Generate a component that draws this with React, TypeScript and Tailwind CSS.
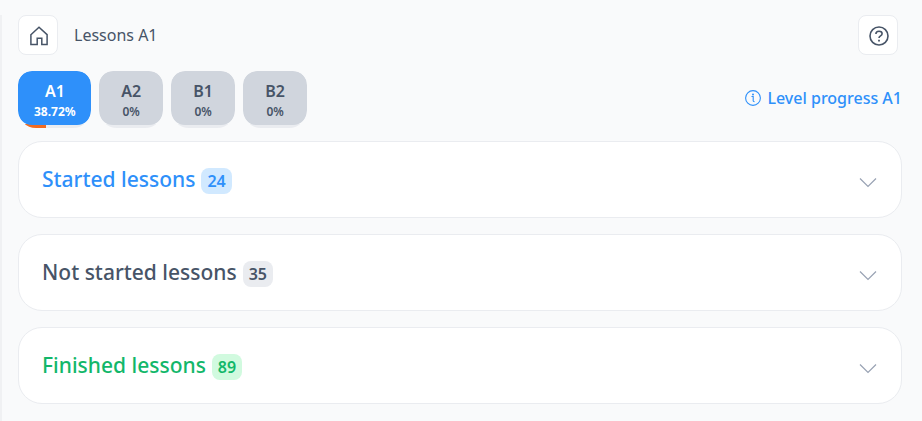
import { useState } from 'react';

type Level = {
  name: string;
  progress: number;
};

type Section = {
  title: string;
  count: number;
  titleClass: string;
  badgeClass: string;
};

const levels: Level[] = [
  { name: 'A1', progress: 38.72 },
  { name: 'A2', progress: 0 },
  { name: 'B1', progress: 0 },
  { name: 'B2', progress: 0 },
];

const sections: Section[] = [
  {
    title: 'Started lessons',
    count: 24,
    titleClass: 'text-[#2e90fa]',
    badgeClass: 'bg-[#d1e9ff]',
  },
  {
    title: 'Not started lessons',
    count: 35,
    titleClass: 'text-[#475467]',
    badgeClass: 'bg-[#eaecf0]',
  },
  {
    title: 'Finished lessons',
    count: 89,
    titleClass: 'text-[#12b76a]',
    badgeClass: 'bg-[#d1fadf]',
  },
];

export default function App() {
  const [active, setActive] = useState('A1');

  return (
    <div className="min-h-screen bg-[#f9fafb] pt-[15px] font-['Noto_Sans',sans-serif] text-[#475467]">
      <main className="min-h-[calc(100vh-15px)] border-l-2 border-[#f0f1f3] pr-5 pl-4">
        <header className="flex items-center justify-between pr-1">
          <div className="flex items-center gap-4">
            <a
              href="#home"
              aria-label="Home"
              className="flex size-10 items-center justify-center rounded-lg border border-[#eaecf0] bg-white pt-0.5 pl-0.5"
            >
              <HomeIcon />
            </a>
            <h1 className="text-base">Lessons A1</h1>
          </div>
          <button
            type="button"
            aria-label="Help"
            className="flex size-10 items-center justify-center rounded-lg border border-[#eaecf0] bg-white pt-0.5 pl-0.5"
          >
            <HelpIcon />
          </button>
        </header>

        <div className="mt-4 flex items-center justify-between">
          <nav className="flex gap-2">
            {levels.map((level) => (
              <LevelTab
                key={level.name}
                level={level}
                active={level.name === active}
                onSelect={() => setActive(level.name)}
              />
            ))}
          </nav>
          <a
            href="#progress"
            className="flex items-center gap-1.5 pb-1 text-base font-medium text-[#2e90fa]"
          >
            <InfoIcon />
            Level progress A1
          </a>
        </div>

        <div className="mt-[13px] flex flex-col gap-4">
          {sections.map((section) => (
            <LessonSection key={section.title} section={section} />
          ))}
        </div>
      </main>
    </div>
  );
}

type LevelTabProps = {
  level: Level;
  active: boolean;
  onSelect: () => void;
};

function LevelTab({ level, active, onSelect }: LevelTabProps) {
  return (
    <div className="overflow-hidden rounded-t-[14px] rounded-b-[18px]">
      <button
        type="button"
        aria-pressed={active}
        onClick={onSelect}
        className={`relative flex h-[54px] min-w-16 flex-col items-center justify-center rounded-[14px] pt-2 pr-[15px] pl-4 ${
          active ? 'bg-[#2e90fa] text-white' : 'bg-[#d0d5dd]'
        }`}
      >
        <span className="text-base leading-5 font-semibold">{level.name}</span>
        <span className={`text-xs leading-[22px] ${active ? 'font-bold' : 'font-semibold'}`}>
          {level.progress}%
        </span>
      </button>
      <div className="-mt-px h-1 bg-[#eaecf0]">
        <div className="h-full bg-[#f26b21]" style={{ width: `${level.progress}%` }} />
      </div>
    </div>
  );
}

function LessonSection({ section }: { section: Section }) {
  return (
    <section className="rounded-3xl border border-[#eaecf0] bg-white">
      <button
        type="button"
        aria-expanded={false}
        className="flex w-full items-center justify-between py-[23px] pr-6 pl-[23px]"
      >
        <span className={`flex items-end gap-1.5 ${section.titleClass}`}>
          <span className="text-[21px] leading-[29px] font-medium">{section.title}</span>
          <span
            className={`rounded-lg px-1.5 text-base leading-[26px] font-semibold ${section.badgeClass}`}
          >
            {section.count}
          </span>
        </span>
        <ChevronIcon />
      </button>
    </section>
  );
}

function HomeIcon() {
  return (
    <svg width="20" height="20" viewBox="0 0 20 20" fill="none" stroke="currentColor" strokeWidth="1.5">
      <path d="M1.9 8.7 10 1.3l8.1 7.4v9.9h-5.3v-6.4H8.2v6.4H1.9z" />
    </svg>
  );
}

function HelpIcon() {
  return (
    <svg width="20" height="20" viewBox="0 0 20 20" fill="none" stroke="currentColor" strokeWidth="1.6">
      <circle cx="10" cy="10" r="9" />
      <path d="M6.9 7.9c0-1.7 1.3-2.7 3.1-2.7s3.1 1 3.1 2.5c0 2.3-3.1 2.1-3.1 4.4" />
      <path d="M10 13.8v1.8" strokeWidth="1.8" />
    </svg>
  );
}

function InfoIcon() {
  return (
    <svg width="16" height="16" viewBox="0 0 16 16" fill="none" stroke="currentColor">
      <circle cx="8" cy="8" r="7.4" strokeWidth="1.1" />
      <path d="M6.5 6.5h1.7v4.5q0 .6 1.3.6" strokeWidth="1.1" />
      <circle cx="8" cy="4.5" r="1" fill="currentColor" stroke="none" />
    </svg>
  );
}

function ChevronIcon() {
  return (
    <svg width="18" height="18" viewBox="0 0 18 18" fill="none" stroke="#98a2b3" strokeWidth="1.2">
      <path d="m1 7.5 8 8 8-8" />
    </svg>
  );
}
